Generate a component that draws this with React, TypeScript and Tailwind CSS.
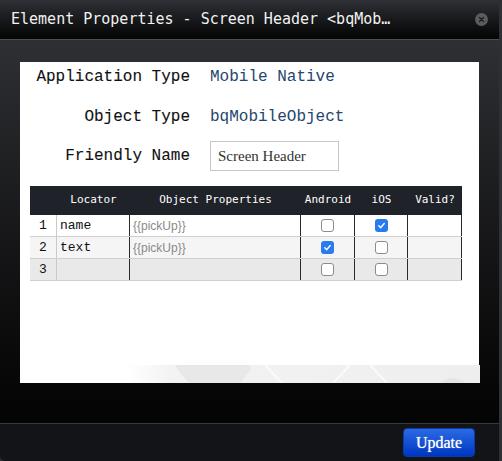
import type { ReactNode } from "react";

type Row = {
  n: number;
  locator: string;
  props: string;
  android: boolean;
  ios: boolean;
  bg: string;
};

const rows: Row[] = [
  { n: 1, locator: "name", props: "{{pickUp}}", android: false, ios: true, bg: "bg-white" },
  { n: 2, locator: "text", props: "{{pickUp}}", android: true, ios: false, bg: "bg-[#f5f5f5]" },
  { n: 3, locator: "", props: "", android: false, ios: false, bg: "bg-[#e9e9e9]" },
];

function Checkbox({ checked }: { checked: boolean }) {
  if (checked) {
    return (
      <span className="flex h-[13px] w-[13px] items-center justify-center rounded-[3px] bg-[#2b7bf0]">
        <svg width="9" height="9" viewBox="0 0 10 10">
          <path d="M2 5.2 L4.2 7.4 L8 2.8" fill="none" stroke="white" strokeWidth="1.6" strokeLinecap="round" strokeLinejoin="round" />
        </svg>
      </span>
    );
  }
  return <span className="block h-[13px] w-[13px] rounded-[3px] border border-[#8c8c8c] bg-white" />;
}

function FieldRow({ label, children, className }: { label: string; children: ReactNode; className: string }) {
  return (
    <div className={`flex items-center ${className}`}>
      <div className="w-[170px] shrink-0 text-right text-[16px] text-[#111] [-webkit-text-stroke:0.1px]">{label}</div>
      <div className="ml-[20px]">{children}</div>
    </div>
  );
}

function Watermark() {
  return (
    <svg className="absolute bottom-0 left-0" width="460" height="18" viewBox="0 0 460 18">
      <defs>
        <linearGradient id="fade" x1="0" x2="1" y1="0" y2="0">
          <stop offset="0" stopColor="#ffffff" />
          <stop offset="0.12" stopColor="#f3f3f3" />
          <stop offset="1" stopColor="#eeeeee" />
        </linearGradient>
      </defs>
      <rect x="107" y="0" width="353" height="18" fill="url(#fade)" />
      <path d="M155 0 L228 0 Q234 2 228 8 L220 18 L170 18 Q160 10 155 0 Z" fill="#e8e8e8" />
      <path d="M245 0 L262 18" stroke="#fafafa" strokeWidth="2" />
      <path d="M330 0 L313 18" stroke="#fafafa" strokeWidth="2" />
      <path d="M350 0 L367 18" stroke="#fafafa" strokeWidth="2" />
      <path d="M420 18 Q432 8 446 18 Z" fill="#e6e6e6" />
    </svg>
  );
}

export default function App() {
  return (
    <div className="h-[461px] w-[502px] overflow-hidden bg-[#2f3033]">
      <div className="flex h-[461px] w-[499px] flex-col overflow-hidden rounded-bl-[5px]">
        {/* Title bar */}
        <div className="flex h-[40px] shrink-0 items-center border-b border-[#4f5053] bg-linear-to-b from-[#2f3136] to-[#050505] pl-[11px] pr-[11px]">
          <div className="flex-1 truncate font-['DejaVu_Sans_Mono',monospace] text-[15px] text-[#f2f2f2]">
            Element Properties - Screen Header &lt;bqMob…
          </div>
          <span className="flex h-[13px] w-[13px] items-center justify-center rounded-full bg-[#5b5c5e]">
            <svg width="7" height="7" viewBox="0 0 7 7">
              <path d="M1.5 1.5 L5.5 5.5 M5.5 1.5 L1.5 5.5" stroke="#1f1f1f" strokeWidth="1.4" strokeLinecap="round" />
            </svg>
          </span>
        </div>

        {/* Body */}
        <div className="flex-1 bg-linear-to-b from-[#2f3034] to-[#040404] px-[20px] pt-[22px]">
          <div className="relative h-[321px] bg-white font-['Liberation_Mono',monospace]">
            <FieldRow label="Application Type" className="h-[28px] pt-px">
              <span className="text-[16px] text-[#24466d]">Mobile Native</span>
            </FieldRow>
            <FieldRow label="Object Type" className="mt-[13px] h-[28px]">
              <span className="text-[16px] text-[#24466d]">bqMobileObject</span>
            </FieldRow>
            <FieldRow label="Friendly Name" className="mt-[10px] h-[30px]">
              <div className="flex h-[30px] w-[129px] items-center border border-[#c6c6c6] pl-[7px] font-['Liberation_Serif',serif] text-[15px] text-[#333]">
                Screen Header
              </div>
            </FieldRow>

            {/* Locator grid */}
            <div className="ml-[10px] mt-[15px] w-[432px]">
              <div className="grid h-[29px] grid-cols-[27px_73px_171px_54px_53px_54px] items-center bg-[#1f2329] text-center font-['DejaVu_Sans_Mono',monospace] text-[11px] text-white">
                <span />
                <span>Locator</span>
                <span>Object Properties</span>
                <span>Android</span>
                <span>iOS</span>
                <span>Valid?</span>
              </div>
              {rows.map((r) => (
                <div
                  key={r.n}
                  className={`grid h-[22px] grid-cols-[27px_73px_171px_54px_53px_54px] border-b border-[#cfcfcf] text-[13px] ${r.bg}`}
                >
                  <span className="flex items-center justify-center border-r border-[#c9c9c9] text-[#111]">{r.n}</span>
                  <span className="flex items-center border-r border-[#2a2a2a] pl-[3px] text-[#111]">{r.locator}</span>
                  <span className="flex items-center border-r border-[#2a2a2a] pl-[3px] font-['Liberation_Sans',sans-serif] text-[12px] text-[#8a8a8a]">
                    {r.props}
                  </span>
                  <span className="flex items-center justify-center border-r border-[#2a2a2a]">
                    <Checkbox checked={r.android} />
                  </span>
                  <span className="flex items-center justify-center border-r border-[#2a2a2a]">
                    <Checkbox checked={r.ios} />
                  </span>
                  <span className="border-r border-[#2a2a2a]" />
                </div>
              ))}
            </div>

            <Watermark />
          </div>
        </div>

        {/* Footer */}
        <div className="flex h-[38px] shrink-0 items-center justify-end border-t border-[#38393c] bg-[#131418] pr-[24px]">
          <button className="h-[29px] w-[72px] rounded-[4px] border border-[#0c3aa8] bg-linear-to-b from-[#2b6ae4] to-[#0035c2] font-['Liberation_Serif',serif] text-[16px] text-white [text-shadow:0_0_1px_rgba(255,255,255,0.8)]">
            Update
          </button>
        </div>
      </div>
    </div>
  );
}
